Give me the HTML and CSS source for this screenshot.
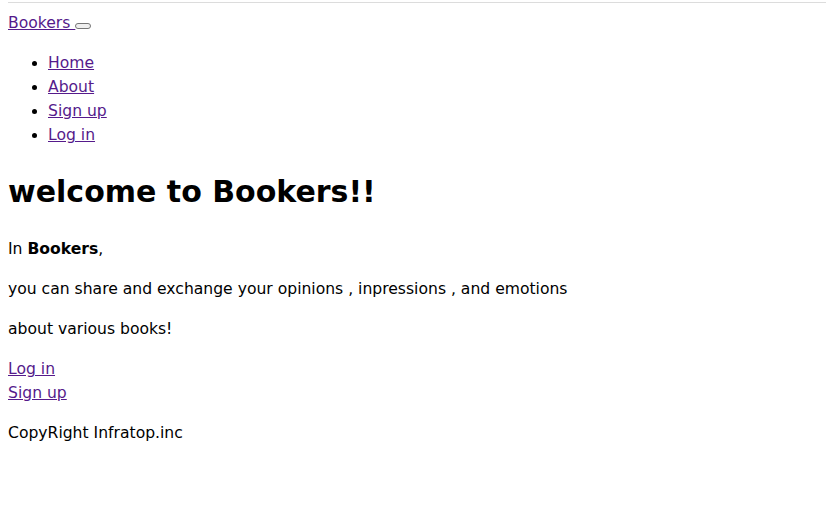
FILE: index.html
```html
<!DOCTYPE html>
<html lang="ja">
<head>
<meta charset="utf-8">
<title>Bookers</title>
<link rel="stylesheet" href="styles.css">
</head>
<body>
<div class="topline"></div>
<header class="site-header">
  <nav class="navbar">
    <a class="brand" href="#">Bookers </a><button class="toggler" type="button" aria-label="menu"></button>
    <ul class="nav-list">
      <li><a href="#">Home</a></li>
      <li><a href="#">About</a></li>
      <li><a href="#">Sign up</a></li>
      <li><a href="#">Log in</a></li>
    </ul>
  </nav>
</header>
<main class="content">
  <h1 class="title">welcome to Bookers!!</h1>
  <p>In <strong>Bookers</strong>,</p>
  <p>you can share and exchange your opinions , inpressions , and emotions</p>
  <p>about various books!</p>
  <a href="#">Log in</a><br>
  <a href="#">Sign up</a>
</main>
<footer class="site-footer">
  <p>CopyRight Infratop.inc</p>
</footer>
</body>
</html>
```

FILE: styles.css
```css
html {
  background: #fff;
}
body {
  margin: 0 8px 8px;
  font-family: "DejaVu Sans", "Noto Sans", sans-serif;
  font-size: 15.6px;
  line-height: 24px;
  color: #000;
}
.topline {
  height: 1px;
  margin-top: 2px;
  margin-left: -8px;
  margin-right: -8px;
  background: #dcdcdc;
}
.site-header {
  padding-top: 8px;
}
a {
  color: #551a8b;
}
.toggler {
  display: inline-block;
  width: 16px;
  height: 6px;
  padding: 0;
  margin: 0;
  border: 1px solid #767676;
  border-radius: 3px;
  background: #efefef;
  vertical-align: baseline;
}
.nav-list {
  margin: 16px 0;
  padding-left: 40px;
}
.title {
  font-size: 30px;
  line-height: 48px;
  margin: 21px 0;
  font-weight: bold;
}
p {
  margin: 16px 0;
}
```
